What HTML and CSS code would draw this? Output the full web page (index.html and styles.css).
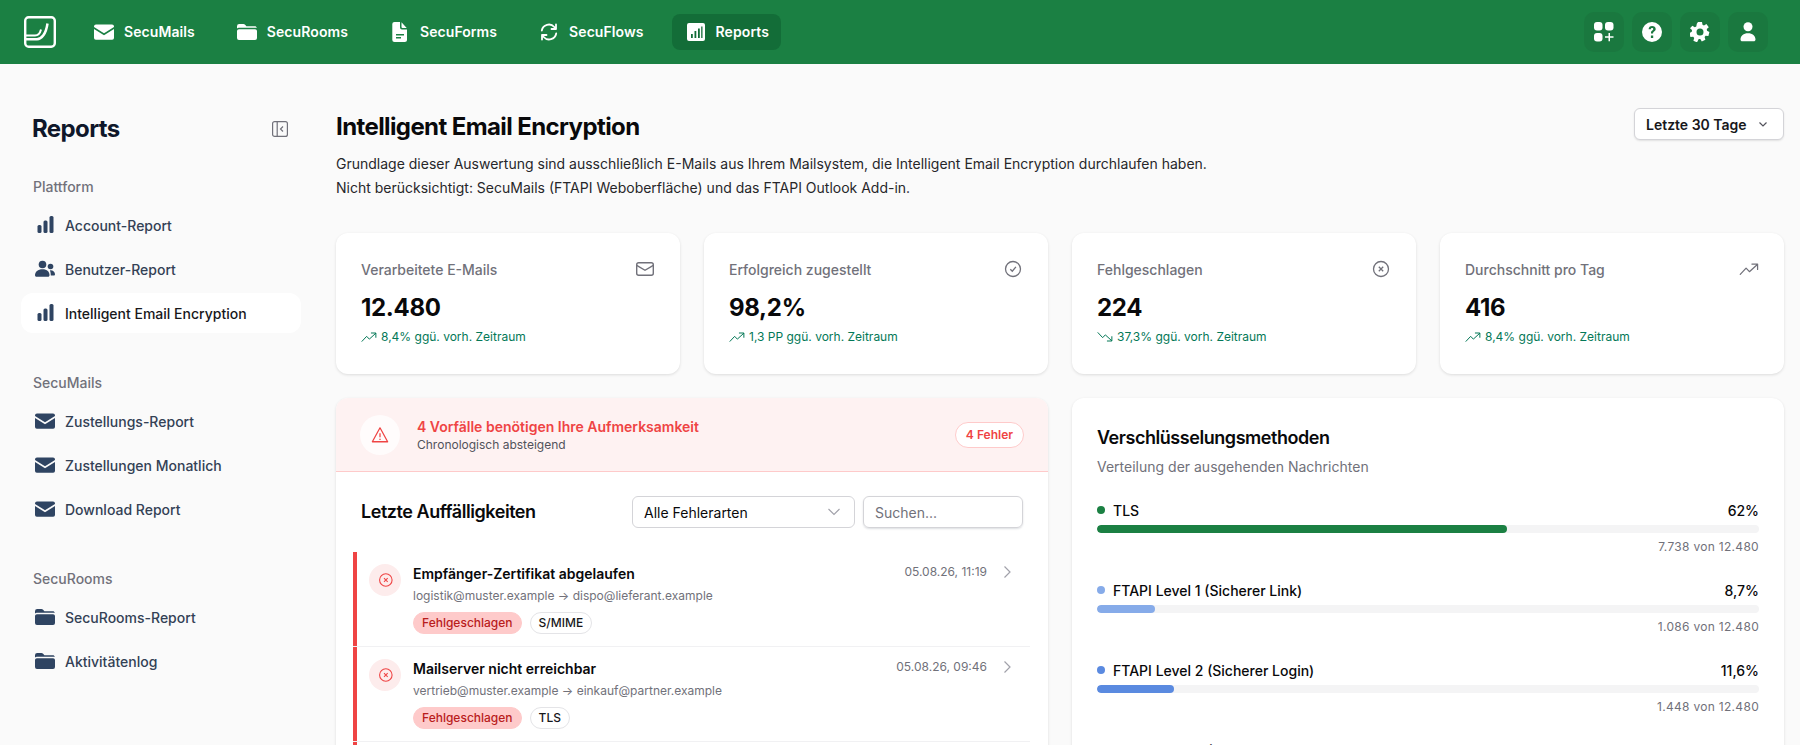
FILE: index.html
```html
<!DOCTYPE html>
<html lang="de">
<head>
<meta charset="utf-8">
<title>Reports</title>
<link rel="stylesheet" href="styles.css">
</head>
<body>
<svg class="sprite" aria-hidden="true">
  <symbol id="i-mail" viewBox="0 0 20 20"><path fill-rule="evenodd" d="M2 2.5h16a2 2 0 0 1 2 2v.4l-10 6.3L0 4.9v-.4a2 2 0 0 1 2-2ZM0 7v9a1.9 1.9 0 0 0 2 1.8h16a1.9 1.9 0 0 0 2-1.8V7l-10 6.3Z"/></symbol>
  <symbol id="i-folder" viewBox="0 0 20 20"><path d="M0 4.2A2.2 2.2 0 0 1 2.2 2h4.2c.7 0 1.3.3 1.7.8L9.4 4.3h8.4c1 0 1.8.6 2.1 1.5H1.8c-.7 0-1.3.2-1.8.6V4.2Z"/><path d="M1.9 7.2h16.2c1 0 1.9.9 1.9 1.9v7a2 2 0 0 1-2 2H2a2 2 0 0 1-2-2v-7c0-1 .9-1.9 1.9-1.9Z"/></symbol>
  <symbol id="i-file" viewBox="0 0 20 20"><path fill-rule="evenodd" d="M4.5 0H10v5.5a2 2 0 0 0 2 2h5v10.2a2.2 2.2 0 0 1-2.2 2.3H4.5a2.2 2.2 0 0 1-2.2-2.3V2.300A2.200 2.200 0 0 1 4.500 0ZM6 12v1.500h8V12Zm0 3v1.500h5V15Z"/><path d="M11.500.3 16.700 6h-4.200a1 1 0 0 1-1-1Z"/></symbol>
  <symbol id="i-sync" viewBox="0 0 20 20"><path fill="none" stroke="currentColor" stroke-width="1.800" stroke-linecap="round" stroke-linejoin="round" d="M2.800 8.500A7.200 7.200 0 0 1 15.300 5L17 7M17 2.500V7h-4.500M17.200 11.500A7.200 7.200 0 0 1 4.700 15L3 13M3 17.500V13h4.500"/></symbol>
  <symbol id="i-chartbox" viewBox="0 0 20 20"><path fill-rule="evenodd" d="M3 1h14a2 2 0 0 1 2 2v14a2 2 0 0 1-2 2H3a2 2 0 0 1-2-2V3a2 2 0 0 1 2-2Zm2 11v4h1.800v-4Zm3.500-3v7h1.800V9ZM12 6.500V16h1.800V6.500Zm3.200-2V16H16.500V4.500Z"/></symbol>
  <symbol id="i-bars" viewBox="0 0 20 20"><rect x="2.500" y="10" width="4" height="8" rx="1.500"/><rect x="8.500" y="5.500" width="4" height="12.500" rx="1.500"/><rect x="14.500" y="1" width="4" height="17" rx="1.500"/></symbol>
  <symbol id="i-users" viewBox="0 0 20 20"><circle cx="7.500" cy="5.500" r="3.800"/><path d="M0 16.300c0-3.400 2.900-6 7.500-6s7 2.600 7 6c0 .9-.6 1.500-1.500 1.500H1.500C.6 17.800 0 17.200 0 16.300Z"/><circle cx="15.500" cy="7.500" r="2.800"/><path d="M15 11.300c2.800-.3 5 1.500 5 3.900 0 .8-.5 1.300-1.200 1.300h-3c0-2-.3-3.600-.8-5.200Z"/></symbol>
  <symbol id="i-mail-o" viewBox="0 0 24 24"><rect x="4.700" y="5.700" width="16.600" height="12.600" rx="2" fill="none" stroke="currentColor" stroke-width="1.400"/><path d="m4.700 8.300 8.300 5 8.300-5" fill="none" stroke="currentColor" stroke-width="1.400"/></symbol>
  <symbol id="i-check-o" viewBox="0 0 24 24"><circle cx="13" cy="12" r="7.500" fill="none" stroke="currentColor" stroke-width="1.300"/><path d="m10.300 12.200 2 2 3.600-4.400" fill="none" stroke="currentColor" stroke-width="1.300"/></symbol>
  <symbol id="i-x-o" viewBox="0 0 24 24"><circle cx="13" cy="12" r="7.500" fill="none" stroke="currentColor" stroke-width="1.300"/><path d="m10.800 9.800 4.400 4.400m0-4.400-4.400 4.400" fill="none" stroke="currentColor" stroke-width="1.300"/></symbol>
  <symbol id="i-up" viewBox="0 0 24 24"><path d="m1.500 18.500 7-7.500 4 4.200L22 6.500M15.500 6h6.800v6.500" fill="none" stroke="currentColor" stroke-width="1.500" stroke-linecap="round" stroke-linejoin="round"/></symbol>
  <symbol id="i-down" viewBox="0 0 24 24"><path d="m1.500 5.500 7 7.500 4-4.200L22 17.500M15.500 18h6.800v-6.500" fill="none" stroke="currentColor" stroke-width="1.500" stroke-linecap="round" stroke-linejoin="round"/></symbol>
  <symbol id="i-chev" viewBox="0 0 16 16"><path d="m5.500 2.500 5.500 5.500-5.500 5.500" fill="none" stroke="currentColor" stroke-width="1.200"/></symbol>
</svg>

<div class="app">
  <header class="topbar">
    <svg class="logo" viewBox="0 0 32 32" aria-label="Logo"><rect x="1.200" y="1.200" width="29.600" height="29.600" rx="3.500" fill="none" stroke="#fff" stroke-width="2.400"/><path d="M2 19.500h9c3 0 5-2 6-6" fill="none" stroke="#fff" stroke-width="2"/><path d="M2 23.200h11c4.500 0 9-5.200 10.500-15.700" fill="none" stroke="#fff" stroke-width="2.500"/></svg>
    <nav class="mainnav">
      <a class="navitem"><svg class="navicon"><use href="#i-mail"/></svg>SecuMails</a>
      <a class="navitem"><svg class="navicon"><use href="#i-folder"/></svg>SecuRooms</a>
      <a class="navitem"><svg class="navicon"><use href="#i-file"/></svg>SecuForms</a>
      <a class="navitem"><svg class="navicon"><use href="#i-sync"/></svg>SecuFlows</a>
      <a class="navitem navitem-active"><svg class="navicon"><use href="#i-chartbox"/></svg>Reports</a>
    </nav>
    <div class="tools">
      <button class="tool"><svg class="toolicon" viewBox="0 0 20 20"><rect x="0" y="0" width="8.500" height="8.500" rx="3"/><rect x="11" y="0" width="8.500" height="8.500" rx="3"/><rect x="0" y="11" width="8.500" height="8.500" rx="3"/><path d="M14.500 11h1.500v3.200h3.500v1.500H16v3.500h-1.500v-3.500H11v-1.500h3.500Z"/></svg></button>
      <button class="tool"><svg class="toolicon" viewBox="0 0 20 20"><path fill-rule="evenodd" d="M10 0a10 10 0 1 1 0 20 10 10 0 0 1 0-20ZM6.600 7.300h2.200c.1-.8.600-1.300 1.300-1.300s1.200.4 1.200 1.100c0 .6-.3.900-1 1.400-1 .6-1.400 1.300-1.300 2.500v.5h2.100v-.4c0-.7.300-1 1-1.500 1-.7 1.600-1.400 1.600-2.600C13.700 5 12.200 4 10.100 4 8 4 6.700 5.200 6.600 7.300Zm2.300 6.300v2.300h2.300v-2.300Z"/></svg></button>
      <button class="tool"><svg class="toolicon" viewBox="0 0 20 20"><path fill-rule="evenodd" d="M8 0h4l.5 2.700 1.500.7 2.400-1.400 2.400 3.200-2 1.800.2 1.700 2.400 1.300-1 3.900-2.800-.2-1 1.300.8 2.700-3.600 1.700-1.500-2.400h-1.600L7 20.400l-3.600-1.700.8-2.700-1-1.300-2.800.2-1-3.900 2.400-1.300.2-1.700-2-1.800L2.400 3.800 4.800 5.200l1.500-.7L6.800 1.800 8 0Zm2 6.500a3.500 3.500 0 1 0 0 7 3.500 3.500 0 0 0 0-7Z"/></svg></button>
      <button class="tool"><svg class="toolicon" viewBox="0 0 20 20"><circle cx="10" cy="4.800" r="4.500"/><path d="M2.500 17.500c0-3.800 3-6.300 7.500-6.300s7.500 2.500 7.500 6.300c0 1-.7 1.800-1.800 1.800H4.300c-1.100 0-1.800-.8-1.800-1.800Z"/></svg></button>
    </div>
  </header>

  <div class="layout">
    <aside class="sidebar">
      <div class="sidehead">
        <h2 class="sidetitle">Reports</h2>
        <svg class="collapse" viewBox="0 0 16 16"><rect x=".6" y=".6" width="14.800" height="14.800" rx="2" fill="none" stroke="currentColor" stroke-width="1.200"/><path d="M5.200.6v14.800M11 5.500 8.500 8l2.500 2.500" fill="none" stroke="currentColor" stroke-width="1.200"/></svg>
      </div>
      <div class="sidegroup">
        <div class="grouplabel">Plattform</div>
        <a class="sideitem"><svg class="sideicon"><use href="#i-bars"/></svg>Account-Report</a>
        <a class="sideitem"><svg class="sideicon"><use href="#i-users"/></svg>Benutzer-Report</a>
        <a class="sideitem sideitem-active"><svg class="sideicon"><use href="#i-bars"/></svg>Intelligent Email Encryption</a>
      </div>
      <div class="sidegroup">
        <div class="grouplabel">SecuMails</div>
        <a class="sideitem"><svg class="sideicon"><use href="#i-mail"/></svg>Zustellungs-Report</a>
        <a class="sideitem"><svg class="sideicon"><use href="#i-mail"/></svg>Zustellungen Monatlich</a>
        <a class="sideitem"><svg class="sideicon"><use href="#i-mail"/></svg>Download Report</a>
      </div>
      <div class="sidegroup">
        <div class="grouplabel">SecuRooms</div>
        <a class="sideitem"><svg class="sideicon"><use href="#i-folder"/></svg>SecuRooms-Report</a>
        <a class="sideitem"><svg class="sideicon"><use href="#i-folder"/></svg>Aktivitätenlog</a>
      </div>
    </aside>

    <main class="main">
      <section class="pagehead">
        <div>
          <h1 class="pagetitle">Intelligent Email Encryption</h1>
          <p class="pagedesc">Grundlage dieser Auswertung sind ausschließlich E-Mails aus Ihrem Mailsystem, die Intelligent Email Encryption durchlaufen haben.<br>Nicht berücksichtigt: SecuMails (FTAPI Weboberfläche) und das FTAPI Outlook Add-in.</p>
        </div>
        <button class="period">Letzte 30 Tage<svg class="periodchev" viewBox="0 0 12 12"><path d="m2.500 4.500 3.500 3.500 3.500-3.500" fill="none" stroke="currentColor" stroke-width="1.200"/></svg></button>
      </section>

      <section class="kpis">
        <article class="card kpi">
          <div class="kpihead"><span>Verarbeitete E-Mails</span><svg class="kpiicon"><use href="#i-mail-o"/></svg></div>
          <div class="kpivalue">12.480</div>
          <div class="kpitrend"><svg class="trendicon"><use href="#i-up"/></svg>8,4% ggü. vorh. Zeitraum</div>
        </article>
        <article class="card kpi">
          <div class="kpihead"><span>Erfolgreich zugestellt</span><svg class="kpiicon"><use href="#i-check-o"/></svg></div>
          <div class="kpivalue">98,2%</div>
          <div class="kpitrend"><svg class="trendicon"><use href="#i-up"/></svg>1,3 PP ggü. vorh. Zeitraum</div>
        </article>
        <article class="card kpi">
          <div class="kpihead"><span>Fehlgeschlagen</span><svg class="kpiicon"><use href="#i-x-o"/></svg></div>
          <div class="kpivalue">224</div>
          <div class="kpitrend"><svg class="trendicon"><use href="#i-down"/></svg>37,3% ggü. vorh. Zeitraum</div>
        </article>
        <article class="card kpi">
          <div class="kpihead"><span>Durchschnitt pro Tag</span><svg class="kpiicon kpiicon-sm"><use href="#i-up"/></svg></div>
          <div class="kpivalue">416</div>
          <div class="kpitrend"><svg class="trendicon"><use href="#i-up"/></svg>8,4% ggü. vorh. Zeitraum</div>
        </article>
      </section>

      <section class="panels">
        <article class="card panel">
          <div class="alert">
            <div class="alertcircle"><svg class="alerticon" viewBox="0 0 20 20"><path d="M10 2 1.500 17.500h17L10 2Z" fill="none" stroke="currentColor" stroke-width="1.400" stroke-linejoin="round"/><path d="M10 8v4.500M10 14.200v1.300" fill="none" stroke="currentColor" stroke-width="1.400"/></svg></div>
            <div class="alerttext">
              <div class="alerttitle">4 Vorfälle benötigen Ihre Aufmerksamkeit</div>
              <div class="alertsub">Chronologisch absteigend</div>
            </div>
            <span class="alertbadge">4 Fehler</span>
          </div>
          <div class="listhead">
            <h3 class="listtitle">Letzte Auffälligkeiten</h3>
            <div class="fakeselect">Alle Fehlerarten<svg class="selectchev" viewBox="0 0 16 16"><path d="m2.500 5 5.500 5.500L13.500 5" fill="none" stroke="currentColor" stroke-width="1.100"/></svg></div>
            <div class="fakeinput">Suchen...</div>
          </div>
          <div class="rows">
            <div class="row">
              <div class="rowcircle"><svg class="rowicon"><use href="#i-x-o"/></svg></div>
              <div class="rowbody">
                <div class="rowtitle">Empfänger-Zertifikat abgelaufen</div>
                <div class="rowsub">logistik@muster.example → dispo@lieferant.example</div>
                <div class="rowtags"><span class="tag tag-fail">Fehlgeschlagen</span><span class="tag">S/MIME</span></div>
              </div>
              <div class="rowdate">05.08.26, 11:19</div>
              <svg class="rowchev"><use href="#i-chev"/></svg>
            </div>
            <div class="row">
              <div class="rowcircle"><svg class="rowicon"><use href="#i-x-o"/></svg></div>
              <div class="rowbody">
                <div class="rowtitle">Mailserver nicht erreichbar</div>
                <div class="rowsub">vertrieb@muster.example → einkauf@partner.example</div>
                <div class="rowtags"><span class="tag tag-fail">Fehlgeschlagen</span><span class="tag">TLS</span></div>
              </div>
              <div class="rowdate">05.08.26, 09:46</div>
              <svg class="rowchev"><use href="#i-chev"/></svg>
            </div>
            <div class="row"></div>
          </div>
        </article>

        <article class="card panel panel-methods">
          <h3 class="methodstitle">Verschlüsselungsmethoden</h3>
          <p class="methodssub">Verteilung der ausgehenden Nachrichten</p>
          <div class="method">
            <div class="methodhead"><span class="dot dot-green"></span><span class="methodname">TLS</span><span class="methodpct">62%</span></div>
            <div class="track"><div class="fill fill-green" style="width:62%"></div></div>
            <div class="methodcount">7.738 von 12.480</div>
          </div>
          <div class="method">
            <div class="methodhead"><span class="dot dot-light"></span><span class="methodname">FTAPI Level 1 (Sicherer Link)</span><span class="methodpct">8,7%</span></div>
            <div class="track"><div class="fill fill-light" style="width:8.7%"></div></div>
            <div class="methodcount">1.086 von 12.480</div>
          </div>
          <div class="method">
            <div class="methodhead"><span class="dot dot-blue"></span><span class="methodname">FTAPI Level 2 (Sicherer Login)</span><span class="methodpct">11,6%</span></div>
            <div class="track"><div class="fill fill-blue" style="width:11.6%"></div></div>
            <div class="methodcount">1.448 von 12.480</div>
          </div>
          <div class="method">
            <div class="methodhead"><span class="dot dot-blue"></span><span class="methodname">FTAPI Level 3 (Ende-zu-Ende-Schutz)</span><span class="methodpct">6,2%</span></div>
          </div>
        </article>
      </section>
    </main>
  </div>
</div>
</body>
</html>
```

FILE: styles.css
```css
* { box-sizing: border-box; }
html, body { margin: 0; height: 100%; overflow: hidden; }
body { font-family: Inter, "Noto Sans", sans-serif; background: #fafafa; color: #09090b; font-size: 14px; }
.sprite { display: none; }
h1, h2, h3, p { margin: 0; }
button { font-family: inherit; border: 0; padding: 0; }

.app { height: 745px; overflow: hidden; display: flex; flex-direction: column; }

/* top bar */
.topbar { flex: 0 0 64px; background: #1b8043; display: flex; align-items: center; padding: 0 32px 0 24px; color: #fff; }
.logo { width: 32px; height: 32px; margin-right: 24px; }
.mainnav { display: flex; gap: 16px; }
.navitem { display: flex; align-items: center; gap: 10px; height: 36px; padding: 0 12px 0 14px; border-radius: 8px; font-weight: 600; font-size: 14px; line-height: 20px; letter-spacing: .08px; }
.navitem-active { background: #136d38; }
.navicon { width: 20px; height: 20px; fill: #fff; color: #fff; }
.tools { margin-left: auto; display: flex; gap: 8px; }
.tool { width: 40px; height: 40px; border-radius: 10px; background: #1a783f; display: flex; align-items: center; justify-content: center; }
.toolicon { width: 20px; height: 20px; fill: #fff; }

/* sidebar */
.layout { flex: 1; display: flex; min-height: 0; }
.sidebar { flex: 0 0 320px; padding: 45px 19px 0 21px; }
.sidehead { display: flex; align-items: center; justify-content: space-between; padding: 0 13px 0 11px; height: 40px; margin-bottom: 28px; }
.sidetitle { font-size: 24px; line-height: 32px; font-weight: 700; color: #0f172a; letter-spacing: -0.6px; }
.collapse { width: 16px; height: 16px; color: #71717a; }
.sidegroup { margin-bottom: 40px; }
.grouplabel { font-size: 14px; line-height: 20px; font-weight: 500; color: #71717a; padding-left: 12px; margin-bottom: 8px; }
.sideitem { display: flex; align-items: center; gap: 10px; height: 40px; margin-bottom: 4px; padding-left: 14px; border-radius: 12px; font-weight: 500; font-size: 14px; color: #334155; }
.sideitem-active { background: #fff; color: #18181b; }
.sideicon { width: 20px; height: 20px; fill: #2f4462; color: #2f4462; }

/* main */
.main { flex: 1; min-width: 0; padding: 47px 16px 0; }
.pagehead { display: flex; justify-content: space-between; align-items: flex-start; height: 122px; }
.pagetitle { font-size: 24px; line-height: 32px; font-weight: 700; letter-spacing: -0.6px; margin-bottom: 9px; }
.pagedesc { font-size: 14px; line-height: 24px; color: #27272a; }
.period { display: flex; align-items: center; gap: 10px; height: 32px; width: 150px; padding: 0 11px; margin-top: -3px; background: #fff; border: 1px solid #d4d4d8; border-radius: 6px; font-size: 14px; font-weight: 600; color: #18181b; box-shadow: 0 1px 2px rgba(0,0,0,.1); }
.periodchev { width: 12px; height: 12px; color: #52525b; }

.card { background: #fff; border-radius: 12px; box-shadow: 0 1px 3px rgba(0,0,0,.12); }
.kpis { display: grid; grid-template-columns: repeat(4, 1fr); gap: 24px; }
.kpi { height: 141px; padding: 24px 25px; }
.kpihead { display: flex; align-items: center; justify-content: space-between; height: 24px; font-weight: 500; font-size: 14px; color: #71717a; }
.kpiicon { width: 24px; height: 24px; color: #71717a; margin-right: -1px; }
.kpiicon-sm { width: 20px; height: 20px; margin-right: 0; }
.kpivalue { font-size: 24px; line-height: 32px; font-weight: 700; color: #09090b; margin-top: 11px; letter-spacing: -0.3px; }
.kpitrend { display: flex; align-items: center; gap: 4px; margin-top: 3px; font-size: 12px; line-height: 20px; color: #047857; }
.trendicon { width: 16px; height: 16px; color: #047857; }

.panels { display: grid; grid-template-columns: 1fr 1fr; gap: 24px; margin-top: 24px; }
.panel { overflow: hidden; min-height: 500px; }

.alert { display: flex; align-items: center; height: 74px; padding: 0 24px; background: #fef2f2; border-bottom: 1px solid #fecaca; }
.alertcircle { width: 40px; height: 40px; border-radius: 50%; background: rgba(255,255,255,.75); display: flex; align-items: center; justify-content: center; margin-right: 17px; }
.alerticon { width: 18px; height: 18px; color: #ef4444; }
.alerttext { flex: 1; }
.alerttitle { font-size: 14px; line-height: 20px; font-weight: 600; color: #ef4444; }
.alertsub { font-size: 12px; line-height: 16px; color: #52525b; }
.alertbadge { height: 26px; line-height: 24px; padding: 0 10px; background: #fff; border: 1px solid #fecaca; border-radius: 13px; font-size: 12px; font-weight: 600; color: #ef4444; }

.listhead { display: flex; align-items: center; padding: 24px 25px 0 25px; height: 56px; gap: 8px; margin-bottom: 24px; }
.listtitle { flex: 1; font-size: 18px; line-height: 28px; font-weight: 600; letter-spacing: -0.45px; }
.fakeselect { width: 223px; height: 32px; display: flex; align-items: center; justify-content: space-between; padding: 0 12px 0 11px; border: 1px solid #d4d4d8; border-radius: 6px; font-size: 14px; background: #fff; }
.selectchev { width: 16px; height: 16px; color: #a1a1aa; }
.fakeinput { width: 160px; height: 32px; display: flex; align-items: center; padding: 0 11px; border: 1px solid #d4d4d8; border-radius: 6px; font-size: 14px; color: #71717a; box-shadow: 0 1px 2px rgba(30,41,59,.15); }

.rows { margin: 0 18px 0 17px; display: flex; flex-direction: column; gap: 1px; background: #f1f1f3; }
.row { display: flex; align-items: flex-start; height: 94px; padding: 12px 0 0 12px; background: #fff; border-left: 4px solid #ef4444; }
.rowcircle { flex: none; width: 32px; height: 32px; border-radius: 50%; background: #fdecec; display: flex; align-items: center; justify-content: center; margin-right: 12px; }
.rowicon { width: 20px; height: 20px; color: #ef4444; }
.rowbody { flex: 1; }
.rowtitle { font-size: 14px; line-height: 20px; font-weight: 600; color: #09090b; }
.rowsub { font-size: 12px; line-height: 20px; color: #71717a; margin-top: 2px; }
.rowtags { display: flex; gap: 8px; margin-top: 6px; }
.tag { height: 22px; line-height: 20px; padding: 0 8px; border: 1px solid #e4e4e7; border-radius: 11px; font-size: 12px; font-weight: 500; color: #18181b; background: #fff; }
.tag-fail { background: #fecaca; border-color: #fecaca; color: #b91c1c; }
.rowdate { font-size: 12px; line-height: 16px; color: #71717a; margin-right: 12px; }
.rowchev { width: 16px; height: 16px; color: #a1a1aa; margin-right: 15px; }

.panel-methods { padding: 26px 25px; }
.methodstitle { font-size: 18px; line-height: 28px; font-weight: 600; letter-spacing: -0.45px; }
.methodssub { font-size: 14px; line-height: 20px; color: #71717a; margin-top: 5px; margin-bottom: 23px; }
.method { height: 80px; }
.methodhead { display: flex; align-items: center; height: 20px; font-size: 14px; font-weight: 500; }
.dot { width: 8px; height: 8px; border-radius: 50%; margin-right: 8px; }
.dot-green { background: #1b8043; }
.dot-light { background: #86abe9; }
.dot-blue { background: #5a8ae0; }
.methodname { flex: 1; }
.track { height: 8px; margin-top: 5px; border-radius: 4px; background: #f4f4f5; overflow: hidden; }
.fill { height: 100%; border-radius: 4px; }
.fill-green { background: #1b8043; }
.fill-light { background: #86abe9; }
.fill-blue { background: #5a8ae0; }
.methodcount { margin-top: 6px; font-size: 12px; line-height: 16px; color: #71717a; text-align: right; letter-spacing: .3px; }
```
